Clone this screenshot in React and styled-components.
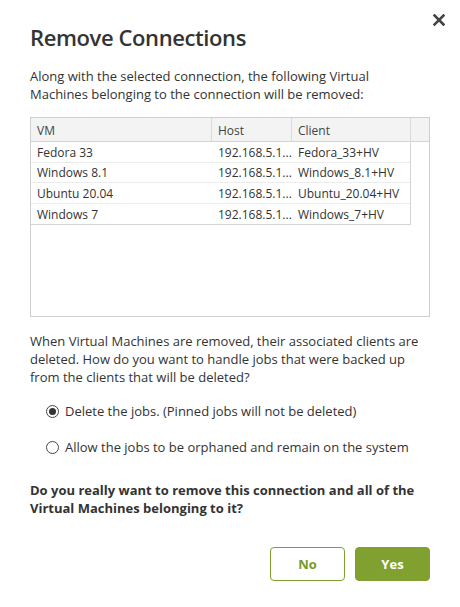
import React from "react";
import styled, { createGlobalStyle } from "styled-components";

const Global = createGlobalStyle`
  html, body { margin: 0; padding: 0; background: #fff; }
  body { font-family: "Open Sans", "Liberation Sans", sans-serif; color: #333; }
  * { box-sizing: border-box; }
`;

const Dialog = styled.div`
  position: relative;
  width: 460px;
  height: 607px;
  padding: 21px 30px 0 30px;
  background: #fff;
`;

const Close = styled.button`
  position: absolute;
  top: 12px;
  right: 13px;
  width: 16px;
  height: 16px;
  padding: 0;
  border: none;
  background: transparent;
  display: flex;
  align-items: center;
  justify-content: center;
  cursor: pointer;
`;

const Title = styled.h1`
  margin: 0;
  font-size: 22px;
  font-weight: 600;
  letter-spacing: -0.4px;
  line-height: 32px;
  color: #333;
`;

const Para = styled.p`
  margin: ${(p) => p.$mt || 0}px 0 0 0;
  font-size: 13px;
  line-height: 18px;
  font-weight: ${(p) => (p.$bold ? 700 : 400)};
  color: #333;
`;

const Grid = styled.div`
  margin-top: 14px;
  width: 400px;
  height: 200px;
  border: 1px solid #cfcfcf;
  display: flex;
  flex-direction: column;
  font-size: 12px;
  color: #333;
`;

const HeaderRow = styled.div`
  display: grid;
  grid-template-columns: 181px 80px 119px 1fr;
  height: 24px;
  background: #f3f3f3;
  border-bottom: 1px solid #d4d4d4;
`;

const HeadCell = styled.div`
  display: flex;
  align-items: center;
  padding-left: 6px;
  padding-top: 1px;
  color: #444;
  border-right: ${(p) => (p.$last ? "none" : "1px solid #d9d9d9")};
`;

const Body = styled.div`
  width: 380px;
  border-right: 1px solid #d4d4d4;
  border-bottom: 1px solid #d4d4d4;
`;

const Row = styled.div`
  display: grid;
  grid-template-columns: 181px 80px 119px;
  height: 20.5px;
  border-bottom: ${(p) => (p.$last ? "none" : "1px solid #ececec")};
`;

const Cell = styled.div`
  display: flex;
  align-items: center;
  padding-left: 6px;
  padding-top: 1px;
  white-space: nowrap;
  overflow: hidden;
`;

const Options = styled.div`
  margin-top: 16px;
  padding-left: 16px;
  display: flex;
  flex-direction: column;
  gap: 18px;
`;

const Option = styled.label`
  display: flex;
  align-items: center;
  gap: 6px;
  font-size: 13px;
  line-height: 18px;
  color: #333;
  cursor: pointer;
`;

const Radio = styled.span`
  width: 13px;
  height: 13px;
  border-radius: 50%;
  border: 1px solid #444;
  display: flex;
  align-items: center;
  justify-content: center;
  flex: none;
  &::after {
    content: "";
    width: 7px;
    height: 7px;
    border-radius: 50%;
    background: ${(p) => (p.$checked ? "#333" : "transparent")};
  }
`;

const Actions = styled.div`
  margin-top: 30px;
  display: flex;
  justify-content: flex-end;
  gap: 10px;
`;

const Button = styled.button`
  width: 75px;
  height: 34px;
  border-radius: 4px;
  border: 1px solid #80a12f;
  background: ${(p) => (p.$primary ? "#80a12f" : "#fff")};
  color: ${(p) => (p.$primary ? "#fff" : "#7a9a28")};
  font-family: "Open Sans", "Liberation Sans", sans-serif;
  font-size: 13px;
  font-weight: 700;
  cursor: pointer;
`;

const rows = [
  ["Fedora 33", "192.168.5.1...", "Fedora_33+HV"],
  ["Windows 8.1", "192.168.5.1...", "Windows_8.1+HV"],
  ["Ubuntu 20.04", "192.168.5.1...", "Ubuntu_20.04+HV"],
  ["Windows 7", "192.168.5.1...", "Windows_7+HV"],
];

export default function App() {
  return (
    <Dialog>
      <Global />
      <Close aria-label="Close">
        <svg width="12" height="12" viewBox="0 0 12 12">
          <path d="M1.5 1.5 L10.5 10.5 M10.5 1.5 L1.5 10.5" stroke="#444" strokeWidth="2.6" strokeLinecap="square" />
        </svg>
      </Close>
      <Title>Remove Connections</Title>
      <Para $mt={14}>
        Along with the selected connection, the following Virtual Machines belonging to the connection will be removed:
      </Para>
      <Grid>
        <HeaderRow>
          <HeadCell>VM</HeadCell>
          <HeadCell>Host</HeadCell>
          <HeadCell>Client</HeadCell>
          <HeadCell $last />
        </HeaderRow>
        <Body>
          {rows.map((r, i) => (
            <Row key={i} $last={i === rows.length - 1}>
              <Cell>{r[0]}</Cell>
              <Cell>{r[1]}</Cell>
              <Cell>{r[2]}</Cell>
            </Row>
          ))}
        </Body>
      </Grid>
      <Para $mt={15}>
        When Virtual Machines are removed, their associated clients are deleted. How do you want to handle jobs that were backed up from the clients that will be deleted?
      </Para>
      <Options>
        <Option>
          <Radio $checked />
          Delete the jobs. (Pinned jobs will not be deleted)
        </Option>
        <Option>
          <Radio />
          Allow the jobs to be orphaned and remain on the system
        </Option>
      </Options>
      <Para $mt={25} $bold>
        Do you really want to remove this connection and all of the Virtual Machines belonging to it?
      </Para>
      <Actions>
        <Button>No</Button>
        <Button $primary>Yes</Button>
      </Actions>
    </Dialog>
  );
}
